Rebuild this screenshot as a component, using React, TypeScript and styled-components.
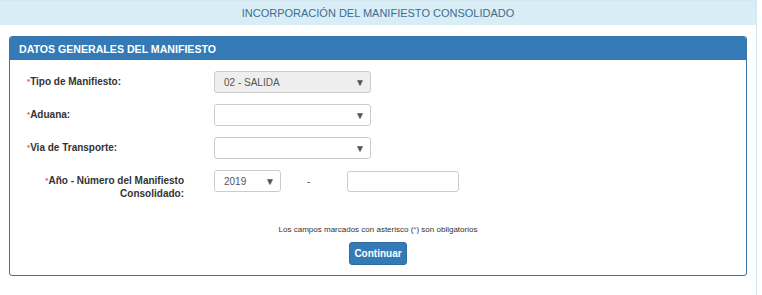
import React from 'react'
import styled, { createGlobalStyle } from 'styled-components'

const GlobalStyle = createGlobalStyle`
    body{
        margin: 0;
        background: #fff;
        font-family: "Liberation Sans", Arial, sans-serif;
    }
`

const Page = styled.div`
    width: 757px;
    height: 295px;
    border-top: 1px solid #d4e7ef;
    border-right: 1px solid #d4e7ef;
    box-sizing: border-box;
`

const TopBar = styled.div`
    height: 24px;
    background: #d9edf7;
    color: #3f6d8c;
    font-size: 11px;
    display: flex;
    align-items: center;
    justify-content: center;
`

const Panel = styled.section`
    margin: 11px 0 0 9px;
    width: 738px;
    border: 1px solid #3a74a8;
    border-radius: 3px;
    overflow: hidden;
    box-sizing: border-box;
`

const PanelHeading = styled.h2`
    margin: 0;
    height: 23px;
    background: #337ab7;
    color: #fff;
    font-size: 10.6px;
    font-weight: bold;
    display: flex;
    align-items: center;
    padding-left: 9px;
`

const PanelBody = styled.div`
    padding: 11px 0 10px 17px;
    display: flex;
    flex-direction: column;
    gap: 11px;
`

const Row = styled.div`
    display: flex;
    align-items: flex-start;
    gap: 30px;
`

const Label = styled.label<{ $right?: boolean }>`
    width: 157px;
    font-size: 10px;
    font-weight: bold;
    color: #333;
    line-height: 13px;
    padding-top: 4px;
    text-align: ${p => (p.$right ? 'right' : 'left')};
    > span{
        color: #d9534f;
        font-size: 8px;
        vertical-align: 1px;
    }
`

const Select = styled.div<{ $width: number; $disabled?: boolean }>`
    width: ${p => p.$width}px;
    height: 22px;
    box-sizing: border-box;
    border: 1px solid #ccc;
    border-radius: 3px;
    background: ${p => (p.$disabled ? '#eee' : '#fff')};
    display: flex;
    align-items: center;
    justify-content: space-between;
    padding: 0 5px 0 9px;
    font-size: 10px;
    color: #555;
    > i{
        font-style: normal;
        font-size: 10px;
        color: #555;
    }
`

const YearGroup = styled.div`
    display: flex;
    align-items: center;
    gap: 26px;
`

const Dash = styled.span`
    width: 14px;
    font-size: 10px;
    color: #555;
`

const TextInput = styled.input`
    width: 112px;
    height: 21px;
    box-sizing: border-box;
    border: 1px solid #ccc;
    border-radius: 3px;
    padding: 0 6px;
`

const Footer = styled.div`
    display: flex;
    flex-direction: column;
    align-items: center;
    gap: 8px;
    margin: 14px 0 0 -17px;
`

const Note = styled.p`
    margin: 0;
    font-size: 8px;
    color: #333;
    > span{
        color: #d9534f;
    }
`

const Button = styled.button`
    width: 58px;
    height: 23px;
    background: #337ab7;
    border: 1px solid #2e6da4;
    border-radius: 3px;
    color: #fff;
    font-family: inherit;
    font-size: 10px;
    font-weight: bold;
    padding: 0;
`

const Star = () => <span>*</span>

function App() {
    return (
        <>
            <GlobalStyle />
            <Page>
                <TopBar>INCORPORACIÓN DEL MANIFIESTO CONSOLIDADO</TopBar>
                <Panel>
                    <PanelHeading>DATOS GENERALES DEL MANIFIESTO</PanelHeading>
                    <PanelBody>
                        <Row>
                            <Label><Star />Tipo de Manifiesto:</Label>
                            <Select $width={157} $disabled>02 - SALIDA<i>▼</i></Select>
                        </Row>
                        <Row>
                            <Label><Star />Aduana:</Label>
                            <Select $width={157}><b /><i>▼</i></Select>
                        </Row>
                        <Row>
                            <Label><Star />Via de Transporte:</Label>
                            <Select $width={157}><b /><i>▼</i></Select>
                        </Row>
                        <Row>
                            <Label $right><Star />Año - Número del Manifiesto Consolidado:</Label>
                            <YearGroup>
                                <Select $width={67}>2019<i>▼</i></Select>
                                <Dash>-</Dash>
                                <TextInput />
                            </YearGroup>
                        </Row>
                        <Footer>
                            <Note>Los campos marcados con asterisco (<span>*</span>) son obligatorios</Note>
                            <Button>Continuar</Button>
                        </Footer>
                    </PanelBody>
                </Panel>
            </Page>
        </>
    )
}

export default App
